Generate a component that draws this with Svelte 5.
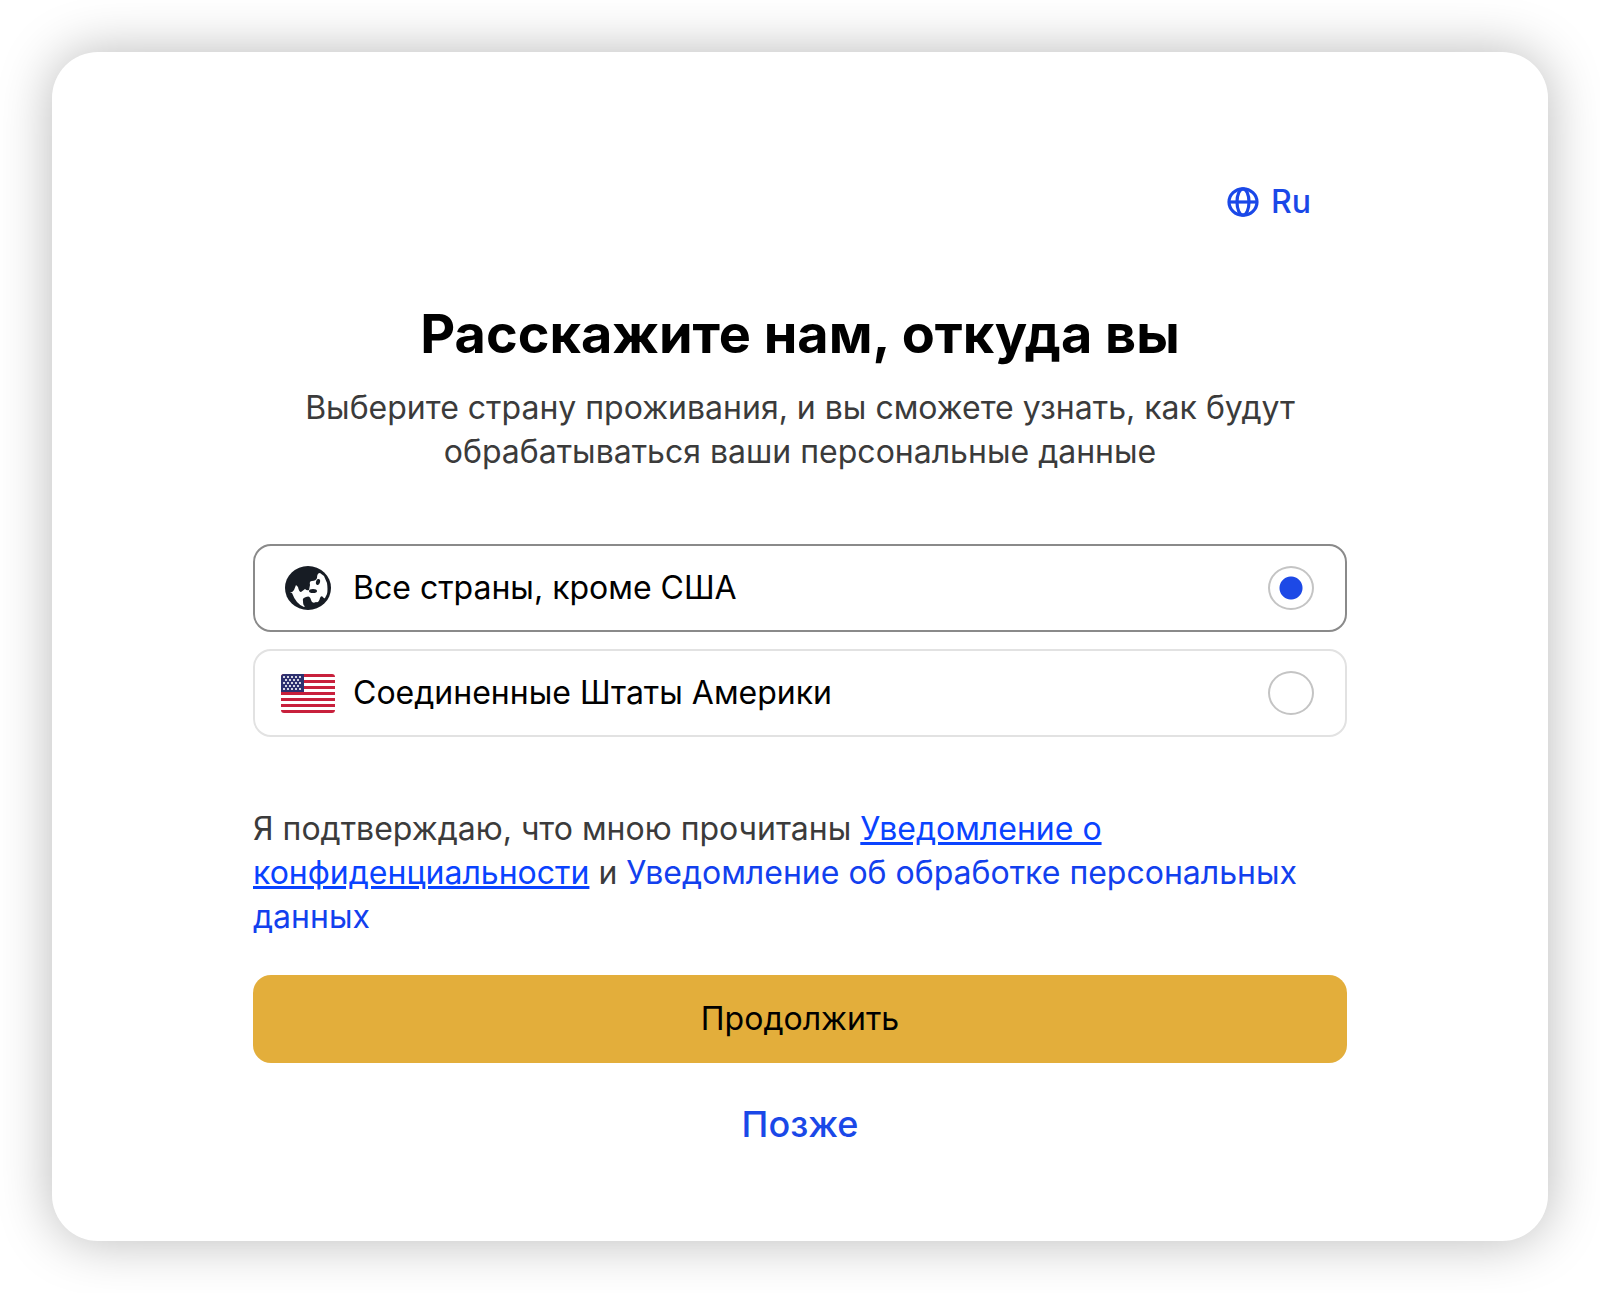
<script>
	let country = $state('world');

	// canton stars: offset rows, five rows in total
	const stars = [];
	for (let row = 0; row < 5; row++) {
		const count = row % 2 ? 4 : 5;
		for (let i = 0; i < count; i++) {
			stars.push({ x: 3 + (row % 2 ? 2 : 0) + i * 4, y: 3 + row * 3 });
		}
	}
</script>

<main class="card">
	<div class="content">
		<div class="topbar">
			<button class="lang" type="button">
				<svg class="globe" viewBox="0 0 32 30" preserveAspectRatio="none" aria-hidden="true">
					<g fill="none" stroke="currentColor" stroke-width="3.2">
						<ellipse cx="16" cy="15" rx="14" ry="13.2" />
						<ellipse cx="16" cy="15" rx="6" ry="13.2" />
						<path d="M2 15h28" />
					</g>
				</svg>
				<span>Ru</span>
			</button>
		</div>

		<h1>Расскажите нам, откуда вы</h1>
		<p class="subtitle">Выберите страну проживания, и вы сможете узнать, как будут обрабатываться ваши персональные данные</p>

		<div class="options">
			<label class="option" class:selected={country === 'world'}>
				<span class="icon">
					<svg width="46" height="44" viewBox="0 0 46 44" aria-hidden="true">
						<ellipse cx="23" cy="22" rx="23" ry="22" fill="#171c24" />
						<path fill="#fff" d="M5 27q3-1 4-3l2-5 2 2q1 5 3 5l4-3q2 2 4 1l1-5q-1-4 2-4 4 0 5-3 0-5 3-5l4 3 3 7q1 7 0 11l-2 4q-1 1-2-1-2-2-3 1-1 5-4 4-4 2-5-2-1-5-5-3-4 1-3 4 0 5 2 5l-1 1q-8-3-12-14z" />
						<ellipse cx="33" cy="16" rx="2" ry="3" transform="rotate(15 33 16)" fill="#171c24" />
						<ellipse cx="28" cy="25" rx="4" ry="2" fill="#171c24" />
					</svg>
				</span>
				<span class="name">Все страны, кроме США</span>
				<input type="radio" name="country" value="world" bind:group={country} />
			</label>
			<label class="option" class:selected={country === 'usa'}>
				<span class="icon">
					<svg width="54" height="39" viewBox="0 0 54 39" aria-hidden="true">
						<clipPath id="flag"><rect width="54" height="39" rx="3" /></clipPath>
						<g clip-path="url(#flag)">
							<rect width="54" height="39" fill="#fff" />
							{#each [0, 1, 2, 3, 4, 5, 6] as i}
								<rect y={i * 6} width="54" height="3" fill="#c8203c" />
							{/each}
							<rect width="23" height="18" fill="#2e3170" />
							{#each stars as star}
								<circle cx={star.x} cy={star.y} r="1.1" fill="#fff" />
							{/each}
						</g>
					</svg>
				</span>
				<span class="name">Соединенные Штаты Америки</span>
				<input type="radio" name="country" value="usa" bind:group={country} />
			</label>
		</div>

		<p class="legal">
			Я подтверждаю, что мною прочитаны <a class="underlined" href="#privacy">Уведомление о конфиденциальности</a> и <a href="#processing">Уведомление об обработке персональных данных</a>
		</p>

		<button class="continue" type="button">Продолжить</button>
		<button class="later" type="button">Позже</button>
	</div>
</main>

<style>
	:global(body) {
		background: #fff;
	}

	.card {
		margin: 52px;
		padding: 128px 24px 95px;
		border-radius: 46px;
		background: #fff;
		box-shadow: 0 0 54px rgba(0, 0, 0, 0.28);
		font-family: Inter, "Liberation Sans", sans-serif;
		font-size: 32px;
		line-height: 44px;
		color: #000;
	}

	.content {
		display: flex;
		flex-direction: column;
		max-width: 1094px;
		margin: 0 auto;
	}

	button {
		border: none;
		background: none;
		padding: 0;
		font: inherit;
		cursor: pointer;
	}

	.topbar {
		display: flex;
		justify-content: flex-end;
		padding-right: 36px;
	}

	.lang {
		display: flex;
		align-items: center;
		gap: 12px;
		color: #1a48e8;
		font-weight: 500;
	}

	.globe {
		width: 32px;
		height: 30px;
	}

	h1 {
		margin: 78px 0 20px;
		font-size: 54px;
		line-height: 64px;
		font-weight: 700;
		text-align: center;
	}

	.subtitle {
		margin: 0;
		color: #3b3b3b;
		text-align: center;
	}

	.options {
		display: flex;
		flex-direction: column;
		gap: 17px;
		margin: 70px 0;
	}

	.option {
		display: flex;
		align-items: center;
		box-sizing: border-box;
		min-height: 88px;
		padding: 0 31px 0 26px;
		border: 2px solid #e2e2e2;
		border-radius: 18px;
		cursor: pointer;
	}

	.option.selected {
		border-color: #8a8a8a;
	}

	.icon {
		display: flex;
		justify-content: center;
		width: 54px;
		margin-right: 18px;
	}

	.name {
		flex: 1;
	}

	input {
		appearance: none;
		width: 46px;
		height: 44px;
		margin: 0;
		border: 2px solid #c4c4c4;
		border-radius: 50%;
		background: #fff;
		cursor: pointer;
	}

	input:checked {
		background: radial-gradient(circle, #1d49e6 11px, #fff 12px);
	}

	.legal {
		margin: 0 0 36px;
		color: #3b3b3b;
	}

	a {
		color: #1240ee;
		text-decoration: none;
	}

	.underlined {
		color: #0a43ff;
		text-decoration: underline;
		text-decoration-thickness: 3px;
	}

	.continue {
		min-height: 88px;
		border-radius: 18px;
		background: #e3ae3b;
		color: #000;
	}

	.later {
		align-self: center;
		margin-top: 39px;
		color: #1a48e8;
		font-size: 36px;
		font-weight: 500;
	}
</style>
